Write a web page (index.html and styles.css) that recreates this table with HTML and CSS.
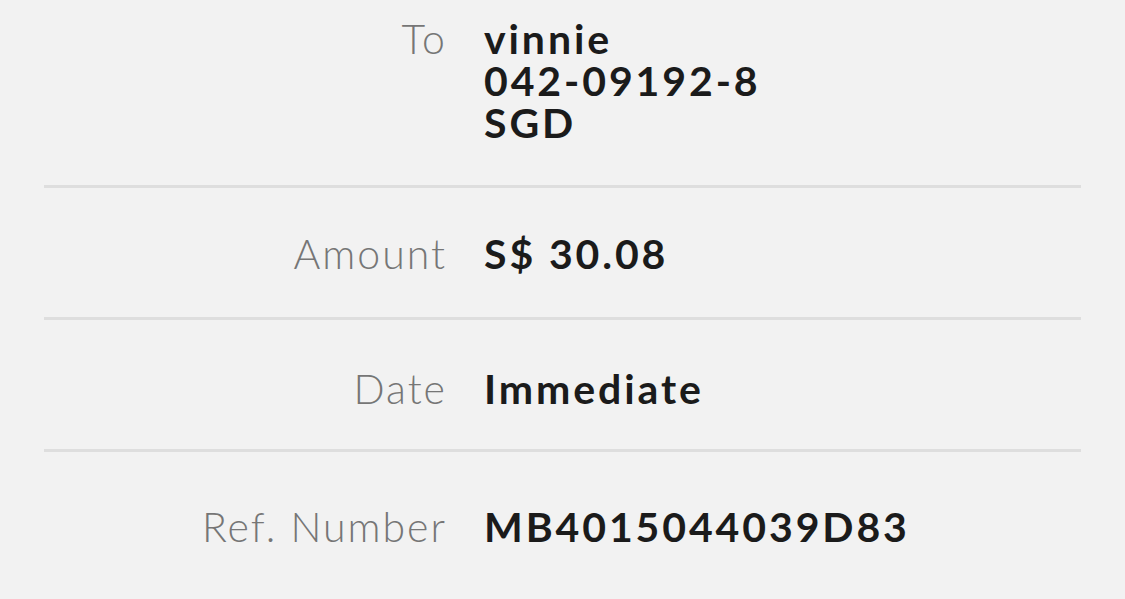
FILE: index.html
```html
<!DOCTYPE html>
<html lang="en">
<head>
<meta charset="utf-8">
<title>Transfer details</title>
<link rel="stylesheet" href="styles.css">
</head>
<body>
<main class="details">
  <div class="row row-first">
    <div class="label">To</div>
    <div class="value">
      <div class="line">vinnie</div>
      <div class="line">042-09192-8</div>
      <div class="line">SGD</div>
    </div>
  </div>
  <div class="row">
    <div class="label">Amount</div>
    <div class="value">S$ 30.08</div>
  </div>
  <div class="row row-date">
    <div class="label">Date</div>
    <div class="value">Immediate</div>
  </div>
  <div class="row row-last">
    <div class="label">Ref. Number</div>
    <div class="value">MB4015044039D83</div>
  </div>
</main>
</body>
</html>
```
FILE: styles.css
```css
html, body {
  margin: 0;
  padding: 0;
  background: #f2f2f2;
}
body {
  font-family: Lato, "Noto Sans", sans-serif;
  width: 1125px;
  height: 599px;
  overflow: hidden;
}
.details {
  margin: 0 44px;
  padding-top: 18px;
}
.row {
  display: grid;
  grid-template-columns: 401px 1fr;
  column-gap: 39px;
  padding: 45px 0 42px;
  border-bottom: 3px solid #dedede;
  font-size: 41px;
  line-height: 42px;
}
.row-first {
  padding-top: 0;
  padding-bottom: 41px;
}
.row-date {
  padding-top: 48px;
  padding-bottom: 39px;
}
.row-last {
  padding-top: 54px;
  border-bottom: none;
}
.label {
  text-align: right;
  font-weight: 300;
  color: #767676;
  letter-spacing: 2px;
  margin-right: -2px;
}
.value {
  font-weight: 700;
  color: #1b1b1b;
  letter-spacing: 2.9px;
}
.line {
  height: 42px;
}
```
